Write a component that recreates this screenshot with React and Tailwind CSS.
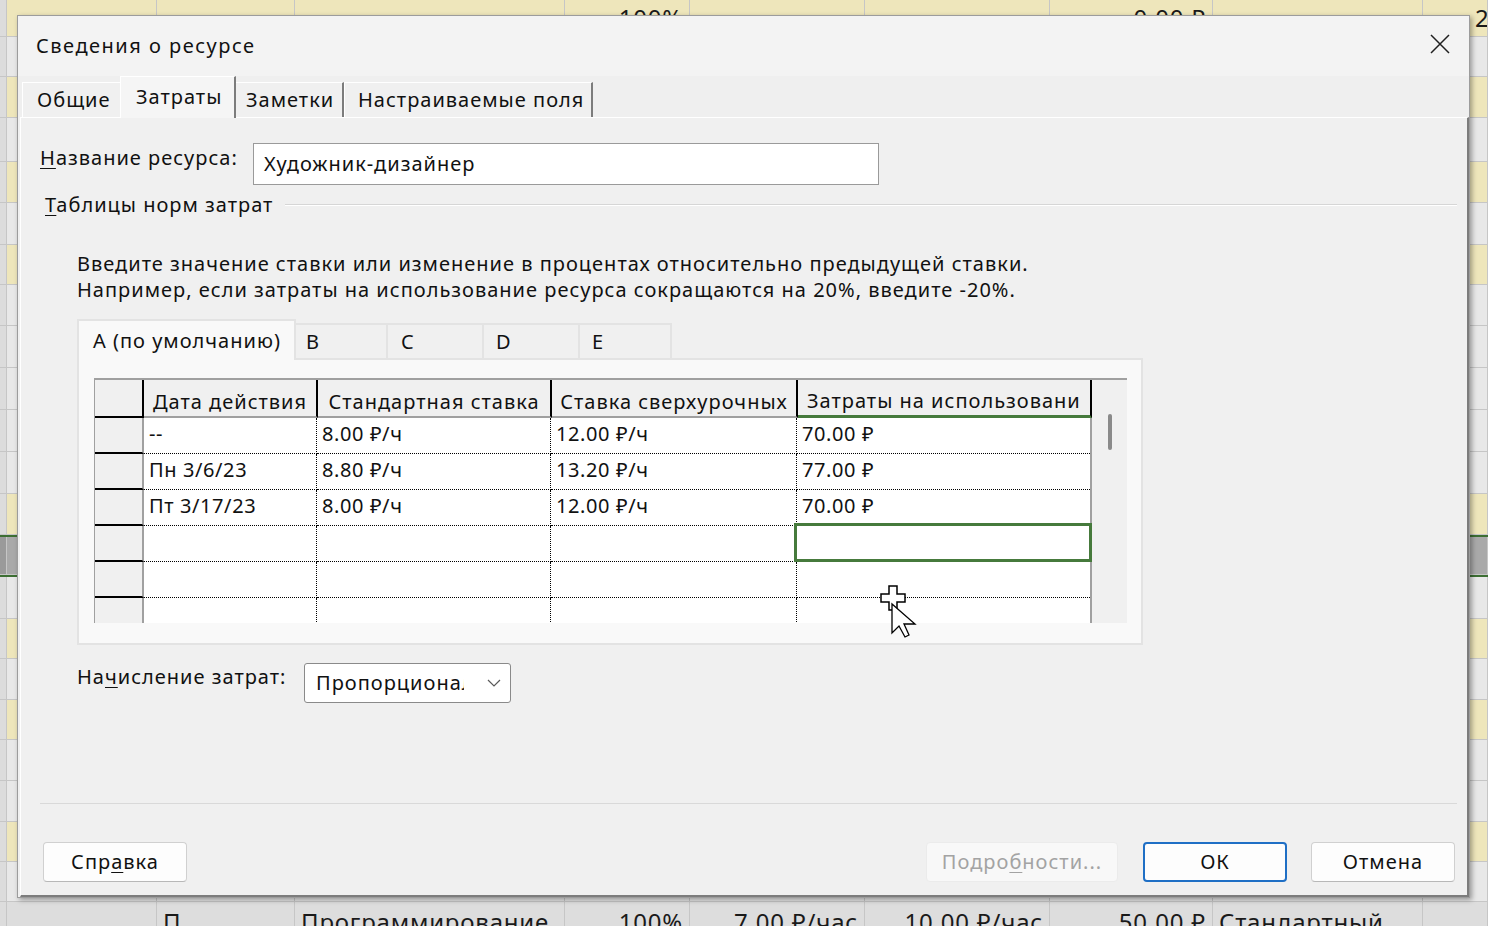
import React from "react";

const colW = ["w-[7px]", "w-[150px]", "w-[138px]", "w-[270px]", "w-[125px]", "w-[175px]", "w-[185px]", "w-[163px]", "w-[210px]", "w-[65px]"];
const rowH = ["h-[37px]", "h-[40px]", "h-[41px]", "h-[44px]", "h-[41px]", "h-[42px]", "h-[40px]", "h-[41px]", "h-[42px]", "h-[42px]", "h-[42px]", "h-[42px]", "h-[41px]", "h-[42px]", "h-[42px]", "h-[40px]", "h-[41px]", "h-[40px]", "h-[41px]", "h-[41px]", "h-[40px]", "h-[40px]", "h-[41px]"];
const yellowRows = new Set([0, 2, 4, 6, 12, 15, 17, 20]);
const selRow = 13;
const bgText = {
  0: { 4: ["100%", "r"], 7: ["0.00 ₽", "r"], 9: ["2", "l52"] },
  22: {
    2: ["П", "l"],
    3: ["Программирование", "l"],
    4: ["100%", "r"],
    5: ["7.00 ₽/час", "r"],
    6: ["10.00 ₽/час", "r"],
    7: ["50.00 ₽", "r"],
    8: ["Стандартный", "l"],
  },
};

function Background() {
  return (
    <div className="flex flex-col">
      {rowH.map((h, r) => {
        const sel = r === selRow;
        const rowBg = sel ? "bg-[#a9a9a9] border-y-2 border-[#3d6f33]" : yellowRows.has(r) ? "bg-[#eee6bb]" : r === 22 ? "bg-[#dddddd]" : "bg-[#e8e8e8]";
        return (
          <div key={r} className={`flex shrink-0 ${h} ${rowBg}`}>
            {colW.map((w, c) => {
              const t = bgText[r] && bgText[r][c];
              const first = c === 0 ? (sel ? "bg-[#9a9a9a]" : "bg-[#dcdcdc]") : "";
              let align = "justify-start pl-[6px]";
              if (t && t[1] === "r") align = "justify-end pr-[6px]";
              if (t && t[1] === "l52") align = "justify-start pl-[52px]";
              return (
                <div key={c} className={`${w} h-full shrink-0 border-r border-b border-[#c6c6c6] ${first} flex items-center overflow-hidden whitespace-nowrap ${align}`}>
                  {t ? <span className="text-[24px] tracking-[0.8px] text-[#1a1a1a]">{t[0]}</span> : null}
                </div>
              );
            })}
          </div>
        );
      })}
    </div>
  );
}

function U({ children }) {
  return <span className="underline underline-offset-[3px] decoration-1">{children}</span>;
}

function RateGrid() {
  const rows = [
    ["--", "8.00 ₽/ч", "12.00 ₽/ч", "70.00 ₽"],
    ["Пн 3/6/23", "8.80 ₽/ч", "13.20 ₽/ч", "77.00 ₽"],
    ["Пт 3/17/23", "8.00 ₽/ч", "12.00 ₽/ч", "70.00 ₽"],
    ["", "", "", ""],
    ["", "", "", ""],
    ["", "", "", ""],
  ];
  return (
    <div className="ml-[15px] mt-[18px] w-[1033px] h-[245px] overflow-hidden flex border-t-2 border-[#a0a0a0]">
      <div className="w-[998px] border-l border-[#a0a0a0] flex flex-col">
        <div className="flex h-[38px] shrink-0">
          <div className="w-[49px] bg-[#f0f0f0] border-r-2 border-b-2 border-black" />
          <div className="w-[174px] bg-[#f0f0f0] border-r-2 border-r-black border-b-2 border-b-[#a0a0a0] flex items-end justify-center whitespace-nowrap">Дата действия</div>
          <div className="w-[234px] bg-[#f0f0f0] border-r-2 border-r-black border-b-2 border-b-[#a0a0a0] flex items-end justify-center whitespace-nowrap">Стандартная ставка</div>
          <div className="w-[246px] bg-[#f0f0f0] border-r-2 border-r-black border-b-2 border-b-[#a0a0a0] flex items-end justify-center whitespace-nowrap">Ставка сверхурочных</div>
          <div className="w-[294px] bg-[#f0f0f0] border-r-2 border-r-black border-b-[3px] border-b-[#467a3c] flex items-end justify-start pl-[9px] overflow-hidden whitespace-nowrap">Затраты на использовани</div>
        </div>
        {rows.map((r, i) => (
          <div key={i} className="flex h-[36px] shrink-0 tracking-[0.6px]">
            <div className="w-[49px] bg-[#f0f0f0] border-r-2 border-r-[#a0a0a0] border-b-2 border-b-black" />
            <div className="w-[173px] bg-white border-r border-b border-dotted border-black pl-[5px] pb-[3px] flex items-center whitespace-nowrap">{r[0]}</div>
            <div className="w-[234px] bg-white border-r border-b border-dotted border-black pl-[5px] pb-[3px] flex items-center whitespace-nowrap">{r[1]}</div>
            <div className="w-[246px] bg-white border-r border-b border-dotted border-black pl-[5px] pb-[3px] flex items-center whitespace-nowrap">{r[2]}</div>
            <div className="relative w-[293px] bg-white border-b border-dotted border-black pl-[5px] pb-[3px] flex items-center whitespace-nowrap">
              {r[3]}
              {i === 3 ? <div className="absolute -left-[3px] -top-[3px] -right-[2px] -bottom-[1px] border-[3px] border-[#467a3c]" /> : null}
            </div>
            <div className="w-[2px] bg-[#a0a0a0]" />
          </div>
        ))}
      </div>
      <div className="w-[35px] bg-[#f0f0f0] flex flex-col">
        <div className="mt-[34px] ml-[16px] w-[4px] h-[36px] rounded-full bg-[#8a8a8a]" />
      </div>
    </div>
  );
}

function Btn({ children, cls }) {
  return (
    <div className={`h-[40px] rounded-[4px] flex items-center justify-center shrink-0 ${cls}`}>{children}</div>
  );
}

function Dialog() {
  return (
    <div className="absolute left-[17px] top-[15px] w-[1453px] h-[883px] flex flex-col bg-[#f0f0f0] border border-[#9c9c9c] shadow-[2px_2px_5px_rgba(0,0,0,0.35)] text-[20px] leading-[28px] tracking-[1px] text-[#111111]">
      <div className="h-[60px] shrink-0 flex items-center justify-between bg-[#f3f3f3] pl-[18px] pr-[19px]">
        <span className="tracking-[1.5px]">Сведения о ресурсе</span>
        <svg width="20" height="20" viewBox="0 0 20 20" className="mb-[5px]">
          <path d="M1 1 L19 19 M19 1 L1 19" stroke="#1f1f1f" strokeWidth="1.5" />
        </svg>
      </div>
      <div className="h-[41px] shrink-0 flex items-end bg-[#efefef] pl-[4px]">
        <div className="w-[98px] h-[35px] bg-[#f0f0f0] border-t border-l border-white pl-[14px] flex items-center">Общие</div>
        <div className="relative z-10 -mb-px w-[116px] h-[42px] bg-[#f5f5f5] border-t border-l border-white border-r-2 border-r-[#7c7c7c] pl-[15px] flex items-center pb-[2px]">Затраты</div>
        <div className="w-[108px] h-[35px] bg-[#f0f0f0] border-t border-white border-r-2 border-r-[#7c7c7c] pl-[10px] flex items-center">Заметки</div>
        <div className="w-[249px] h-[35px] bg-[#f0f0f0] border-t border-l border-white border-r-2 border-r-[#7c7c7c] pl-[13px] flex items-center">Настраиваемые поля</div>
      </div>
      <div className="flex-1 min-h-0 flex flex-col ml-[2px] border-t border-l border-white border-r-2 border-b-2 border-r-[#7c7c7c] border-b-[#7c7c7c]">
        <div className="mt-[25px] flex items-start pl-[19px]">
          <div className="w-[213px] mt-[1px]"><U>Н</U>азвание ресурса:</div>
          <div className="w-[626px] h-[42px] bg-white border border-[#9a9a9a] pl-[10px] flex items-center">Художник-дизайнер</div>
        </div>
        <div className="mt-[6px] h-[28px] flex items-center pl-[24px] pr-[10px]">
          <span><U>Т</U>аблицы норм затрат</span>
          <div className="flex-1 ml-[12px] h-[2px] border-t border-[#d6d6d6] border-b border-b-white" />
        </div>
        <div className="mt-[32px] ml-[56px] leading-[26px]">
          <div>Введите значение ставки или изменение в процентах относительно предыдущей ставки.</div>
          <div>Например, если затраты на использование ресурса сокращаются на 20%, введите -20%.</div>
        </div>
        <div className="mt-[16px] ml-[56px] h-[39px] flex items-end">
          <div className="relative z-10 -mb-[2px] w-[219px] h-[41px] bg-[#f9f9f9] border-2 border-b-0 border-[#e3e3e3] pl-[14px] flex items-center">А (по умолчанию)</div>
          <div className="w-[92px] h-[35px] bg-[#f0f0f0] border-t-2 border-r-2 border-[#e3e3e3] pl-[10px] flex items-center">B</div>
          <div className="w-[96px] h-[35px] bg-[#f0f0f0] border-t-2 border-r-2 border-[#e3e3e3] pl-[13px] flex items-center">C</div>
          <div className="w-[96px] h-[35px] bg-[#f0f0f0] border-t-2 border-r-2 border-[#e3e3e3] pl-[12px] flex items-center">D</div>
          <div className="w-[92px] h-[35px] bg-[#f0f0f0] border-t-2 border-r-2 border-[#e3e3e3] pl-[12px] flex items-center">E</div>
        </div>
        <div className="ml-[56px] w-[1066px] h-[287px] shrink-0 bg-[#f9f9f9] border-2 border-[#e3e3e3]">
          <RateGrid />
        </div>
        <div className="mt-[18px] ml-[56px] flex items-start">
          <div className="w-[227px]">На<U>ч</U>исление затрат:</div>
          <div className="w-[207px] h-[40px] bg-white border border-[#8a8a8a] rounded-[3px] flex items-center pl-[11px]">
            <div className="w-[148px] overflow-hidden whitespace-nowrap">Пропорциональное</div>
            <svg width="14" height="8" viewBox="0 0 14 8" className="ml-[23px]">
              <path d="M1 1 L7 7 L13 1" fill="none" stroke="#5a5a5a" strokeWidth="1.2" />
            </svg>
          </div>
        </div>
        <div className="flex-1" />
        <div className="ml-[19px] mr-[10px] h-px bg-[#d9d9d9]" />
        <div className="mt-[38px] mb-[13px] flex items-center pl-[22px] pr-[12px]">
          <Btn cls="w-[144px] bg-[#fdfdfd] border border-[#d0d0d0] border-b-[#b8b8b8]">Спр<U>а</U>вка</Btn>
          <div className="flex-1" />
          <Btn cls="w-[192px] bg-[#f8f8f8] border border-[#ebebeb] text-[#a3a3a3]">Подро<U>б</U>ности...</Btn>
          <Btn cls="ml-[25px] w-[144px] bg-[#fdfdfd] border-2 border-[#1f6fc5]">ОК</Btn>
          <Btn cls="ml-[24px] w-[144px] bg-[#fdfdfd] border border-[#d0d0d0] border-b-[#b8b8b8]">Отмена</Btn>
        </div>
      </div>
    </div>
  );
}

function Cursor() {
  return (
    <svg className="absolute left-[878px] top-[583px]" width="44" height="60" viewBox="0 0 44 60">
      <path d="M11 3 H19 V11 H27 V19 H19 V27 H11 V19 H3 V11 H11 Z" fill="#ffffff" stroke="#000000" strokeWidth="1.5" />
      <path d="M14 21 L14 50 L21 43 L27 54 L31 52 L26 41 L37 41 Z" fill="#ffffff" stroke="#000000" strokeWidth="1.3" strokeLinejoin="miter" />
    </svg>
  );
}

export default function App() {
  return (
    <div className="relative w-[1488px] h-[926px] overflow-hidden bg-[#e8e8e8] font-['Noto_Sans',sans-serif]">
      <Background />
      <Dialog />
      <Cursor />
    </div>
  );
}
